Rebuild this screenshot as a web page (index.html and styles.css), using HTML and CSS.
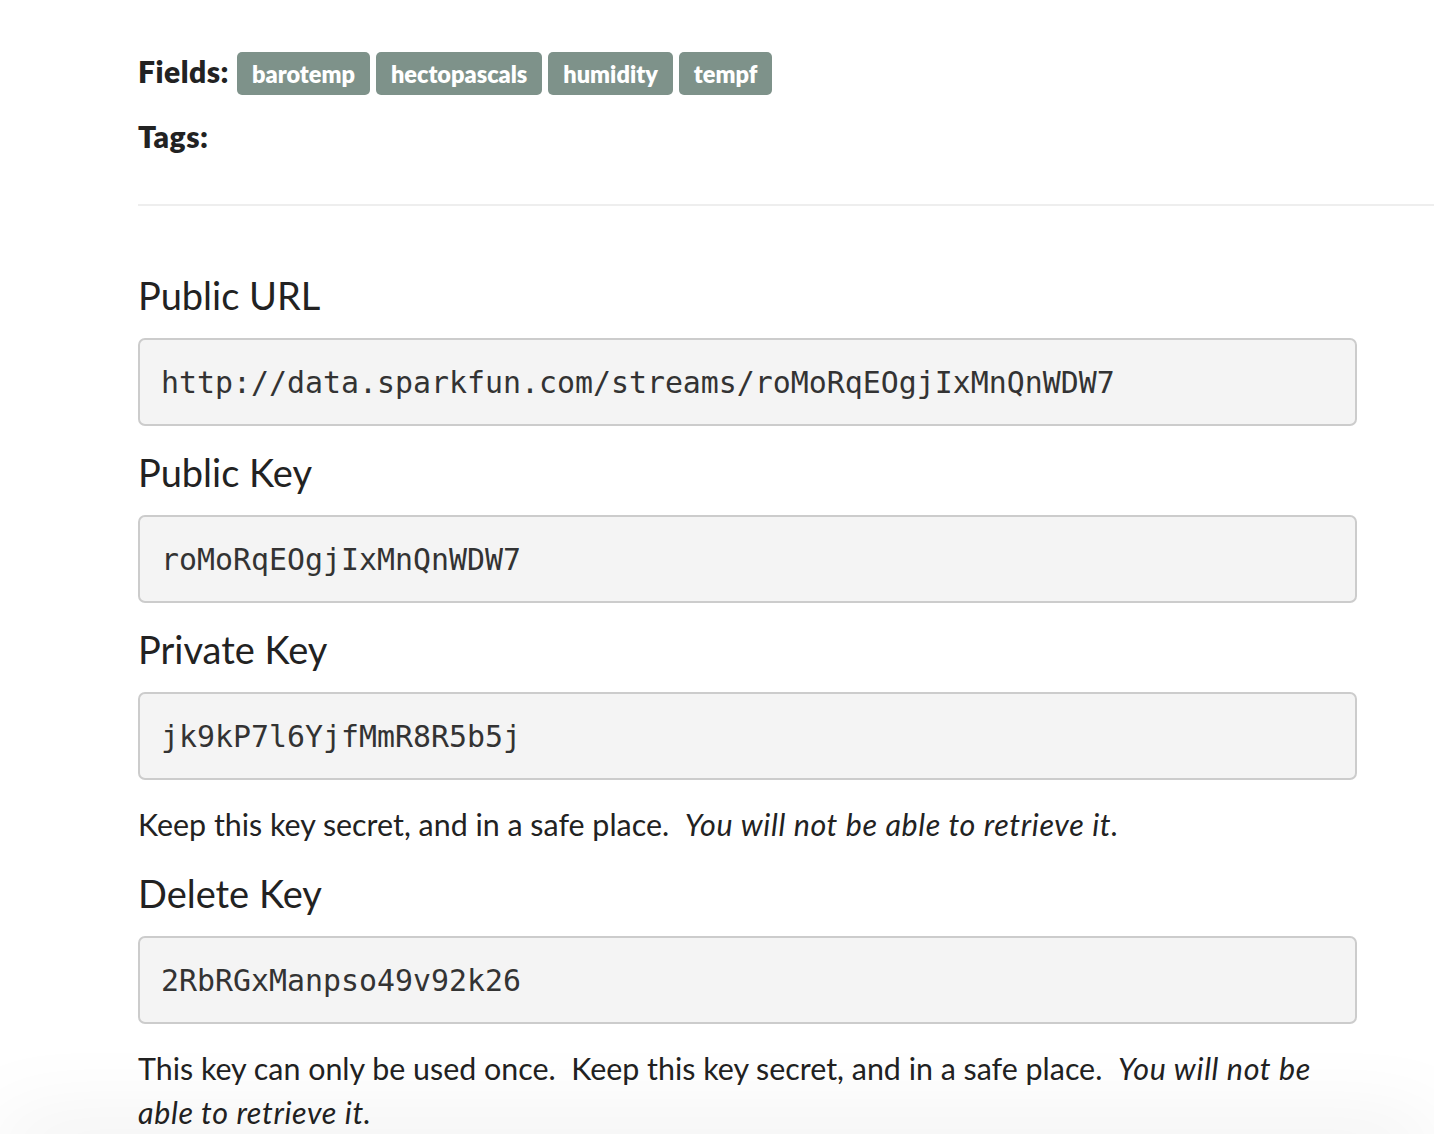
FILE: index.html
```html
<!DOCTYPE html>
<html>
<head>
<meta charset="utf-8">
<link rel="stylesheet" href="styles.css">
</head>
<body>
<div class="page">
  <div class="meta-row">
    <span class="meta-label">Fields:</span>
    <span class="tag">barotemp</span>
    <span class="tag">hectopascals</span>
    <span class="tag">humidity</span>
    <span class="tag">tempf</span>
  </div>
  <div class="meta-row tags-row">
    <span class="meta-label">Tags:</span>
  </div>
  <hr class="divider">
  <section class="keys">
    <h3 class="key-title first">Public URL</h3>
    <pre class="key-box">http://data.sparkfun.com/streams/roMoRqEOgjIxMnQnWDW7</pre>
    <h3 class="key-title">Public Key</h3>
    <pre class="key-box">roMoRqEOgjIxMnQnWDW7</pre>
    <h3 class="key-title">Private Key</h3>
    <pre class="key-box">jk9kP7l6YjfMmR8R5b5j</pre>
    <p class="note">Keep this key secret, and in a safe place.&nbsp; <em>You will not be able to retrieve it.</em></p>
    <h3 class="key-title">Delete Key</h3>
    <pre class="key-box">2RbRGxManpso49v92k26</pre>
    <p class="note">This key can only be used once.&nbsp; Keep this key secret, and in a safe place.&nbsp; <em>You will not be able to retrieve it.</em></p>
  </section>
</div>
<div class="footer-shadow"></div>
</body>
</html>
```

FILE: styles.css
```css
html, body {
  margin: 0;
  padding: 0;
  background: #fff;
}
body {
  font-family: "Lato", "Open Sans", sans-serif;
  color: #222;
  overflow: hidden;
}
.page {
  padding: 52px 0 0 138px;
}
.meta-row {
  display: flex;
  align-items: center;
  gap: 6px;
  height: 43px;
}
.meta-label {
  font-weight: 800;
  font-size: 30px;
  letter-spacing: 0.5px;
  margin-right: 2px;
  position: relative;
  top: -3px;
}
.tag {
  background: #7e928a;
  color: #fff;
  font-weight: 800;
  font-size: 23.5px;
  height: 43px;
  display: flex;
  align-items: center;
  padding: 0 15px;
  border-radius: 5px;
}
.tags-row {
  margin-top: 22px;
}
.divider {
  border: 0;
  border-top: 2px solid #eeeeee;
  margin: 44px 0 0 0;
}
.keys {
  width: 1219px;
}
.key-title {
  font-weight: 400;
  font-size: 38px;
  line-height: 44px;
  margin: 24px 0 21px 0;
}
.key-title.first {
  margin-top: 67px;
}
.note + .key-title {
  margin-top: 25px;
}
.key-box {
  margin: 0;
  background: #f4f4f4;
  border: 2px solid #cccccc;
  border-radius: 7px;
  box-sizing: border-box;
  height: 88px;
  padding: 0 21px;
  display: flex;
  align-items: center;
  font-family: "DejaVu Sans Mono", monospace;
  font-size: 29.9px;
  color: #333;
}
.note {
  font-size: 30.4px;
  line-height: 44px;
  margin: 22px 0 0 0;
}
.note em {
  font-style: italic;
  letter-spacing: 0.65px;
}
.footer-shadow {
  position: fixed;
  left: 0;
  right: 0;
  bottom: -30px;
  height: 30px;
  box-shadow: 0 0 90px rgba(0, 0, 0, 0.13);
  background: #fff;
}
```
